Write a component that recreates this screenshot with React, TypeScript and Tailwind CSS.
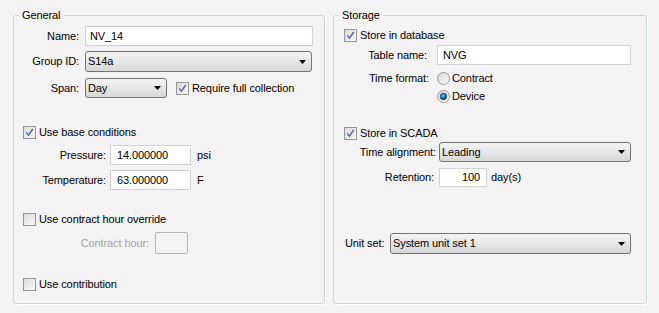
import React from "react";

function Checkbox({ checked }: { checked?: boolean }) {
  return (
    <svg width="13" height="13" viewBox="0 0 13 13" className="shrink-0 block">
      <defs>
        <linearGradient id="cbg" x1="0" y1="0" x2="1" y2="1">
          <stop offset="0" stopColor="#d9d9d9" />
          <stop offset="1" stopColor="#fbfbfb" />
        </linearGradient>
      </defs>
      <rect x="0.5" y="0.5" width="12" height="12" fill="url(#cbg)" stroke="#969696" />
      {checked && (
        <path d="M3.3 6.4 L5.4 9.3 L9.7 3" fill="none" stroke="#4a6aae" strokeWidth="1.5" />
      )}
    </svg>
  );
}

function Radio({ checked }: { checked?: boolean }) {
  return (
    <svg width="13" height="13" viewBox="0 0 13 13" className="shrink-0 block">
      <defs>
        <linearGradient id="rbg" x1="0" y1="0" x2="1" y2="1">
          <stop offset="0" stopColor="#d4d4d4" />
          <stop offset="1" stopColor="#fafafa" />
        </linearGradient>
        <radialGradient id="rdot" cx="0.4" cy="0.35" r="0.7">
          <stop offset="0" stopColor="#7cc6f5" />
          <stop offset="0.55" stopColor="#1670b8" />
          <stop offset="1" stopColor="#0b3566" />
        </radialGradient>
      </defs>
      <circle cx="6.5" cy="6.5" r="6" fill="url(#rbg)" stroke="#9c9c9c" />
      {checked && <circle cx="6.5" cy="6.5" r="3.2" fill="url(#rdot)" stroke="#1b3357" strokeWidth="0.8" />}
    </svg>
  );
}

function Arrow() {
  return (
    <svg width="7" height="4" viewBox="0 0 7 4" className="shrink-0 block">
      <path d="M0 0 H7 L3.5 4 Z" fill="#000" />
    </svg>
  );
}

function Select({ cls, value }: { cls: string; value: string }) {
  return (
    <div
      className={`flex items-center justify-between border border-[#747474] rounded-[3px] bg-gradient-to-b from-[#f4f4f4] to-[#d8d8d8] pl-[2px] pr-[5px] ${cls}`}
    >
      <span>{value}</span>
      <Arrow />
    </div>
  );
}

function TextBox({ cls, value }: { cls: string; value?: string }) {
  return (
    <div className={`flex items-center bg-white border border-[#d3d3d3] ${cls}`}>
      {value}
    </div>
  );
}

export default function App() {
  return (
    <div className="w-[659px] h-[313px] bg-[#f5f2f5] pt-[8px] pl-[13px] flex gap-[8px] text-[11px] text-black font-['Liberation_Sans',Arial,sans-serif] leading-[13px] tracking-[-0.1px]">
      {/* General */}
      <fieldset className="w-[312px] h-[296px] border border-[#cdd6de] rounded-[3px] shadow-[1px_1px_0_#ffffff]">
        <legend className="ml-[5px] px-[3px] leading-[14px]">General</legend>
        <div className="flex flex-col">
          <div className="mt-[4px] h-[20px] flex items-center">
            <span className="w-[65px] text-right">Name:</span>
            <TextBox cls="ml-[6px] w-[228px] h-[20px] pl-[4px]" value="NV_14" />
          </div>
          <div className="mt-[5px] h-[21px] flex items-center">
            <span className="w-[65px] text-right">Group ID:</span>
            <Select cls="ml-[6px] w-[227px] h-[21px]" value="S14a" />
          </div>
          <div className="mt-[6px] h-[20px] flex items-center">
            <span className="w-[65px] text-right">Span:</span>
            <Select cls="ml-[6px] w-[82px] h-[20px]" value="Day" />
            <div className="ml-[9px] flex items-center gap-[3px]">
              <Checkbox checked />
              <span>Require full collection</span>
            </div>
          </div>
          <div className="mt-[28px] h-[13px] ml-[9px] flex items-center gap-[3px]">
            <Checkbox checked />
            <span>Use base conditions</span>
          </div>
          <div className="mt-[6px] h-[20px] flex items-center">
            <span className="w-[92px] text-right">Pressure:</span>
            <TextBox cls="ml-[4px] w-[81px] h-[20px] pl-[6px]" value="14.000000" />
            <span className="ml-[6px]">psi</span>
          </div>
          <div className="mt-[5px] h-[20px] flex items-center">
            <span className="w-[92px] text-right">Temperature:</span>
            <TextBox cls="ml-[4px] w-[81px] h-[20px] pl-[6px]" value="63.000000" />
            <span className="ml-[6px]">F</span>
          </div>
          <div className="mt-[23px] h-[13px] ml-[9px] flex items-center gap-[3px]">
            <Checkbox />
            <span>Use contract hour override</span>
          </div>
          <div className="mt-[6px] h-[22px] flex items-center">
            <span className="w-[135px] text-right text-[#a3a3a3]">Contract hour:</span>
            <div className="ml-[6px] w-[33px] h-[22px] border border-[#b6b6b6] rounded-[2px]" />
          </div>
          <div className="mt-[24px] h-[13px] ml-[9px] flex items-center gap-[3px]">
            <Checkbox />
            <span>Use contribution</span>
          </div>
        </div>
      </fieldset>

      {/* Storage */}
      <fieldset className="w-[314px] h-[296px] border border-[#cdd6de] rounded-[3px] shadow-[1px_1px_0_#ffffff]">
        <legend className="ml-[5px] px-[3px] leading-[14px]">Storage</legend>
        <div className="flex flex-col">
          <div className="mt-[7px] h-[13px] ml-[10px] flex items-center gap-[3px]">
            <Checkbox checked />
            <span>Store in database</span>
          </div>
          <div className="mt-[3px] h-[20px] flex items-center">
            <span className="w-[93px] text-right">Table name:</span>
            <TextBox cls="ml-[10px] w-[194px] h-[20px] pl-[5px]" value="NVG" />
          </div>
          <div className="mt-[7px] h-[13px] flex items-center">
            <span className="w-[95px] text-right">Time format:</span>
            <div className="ml-[8px] flex items-center gap-[2px]">
              <Radio />
              <span>Contract</span>
            </div>
          </div>
          <div className="mt-[5px] h-[13px] ml-[103px] flex items-center gap-[2px]">
            <Radio checked />
            <span>Device</span>
          </div>
          <div className="mt-[24px] h-[13px] ml-[10px] flex items-center gap-[3px]">
            <Checkbox checked />
            <span>Store in SCADA</span>
          </div>
          <div className="mt-[2px] h-[20px] flex items-center">
            <span className="w-[102px] text-right">Time alignment:</span>
            <Select cls="ml-[3px] w-[192px] h-[20px]" value="Leading" />
          </div>
          <div className="mt-[6px] h-[19px] flex items-center">
            <span className="w-[100px] text-right">Retention:</span>
            <TextBox cls="ml-[5px] w-[48px] h-[19px] justify-end pr-[6px]" value="100" />
            <span className="ml-[4px]">day(s)</span>
          </div>
          <div className="mt-[46px] h-[21px] flex items-center">
            <span className="ml-[11px] w-[45px]">Unit set:</span>
            <Select cls="w-[241px] h-[21px]" value="System unit set 1" />
          </div>
        </div>
      </fieldset>
    </div>
  );
}
